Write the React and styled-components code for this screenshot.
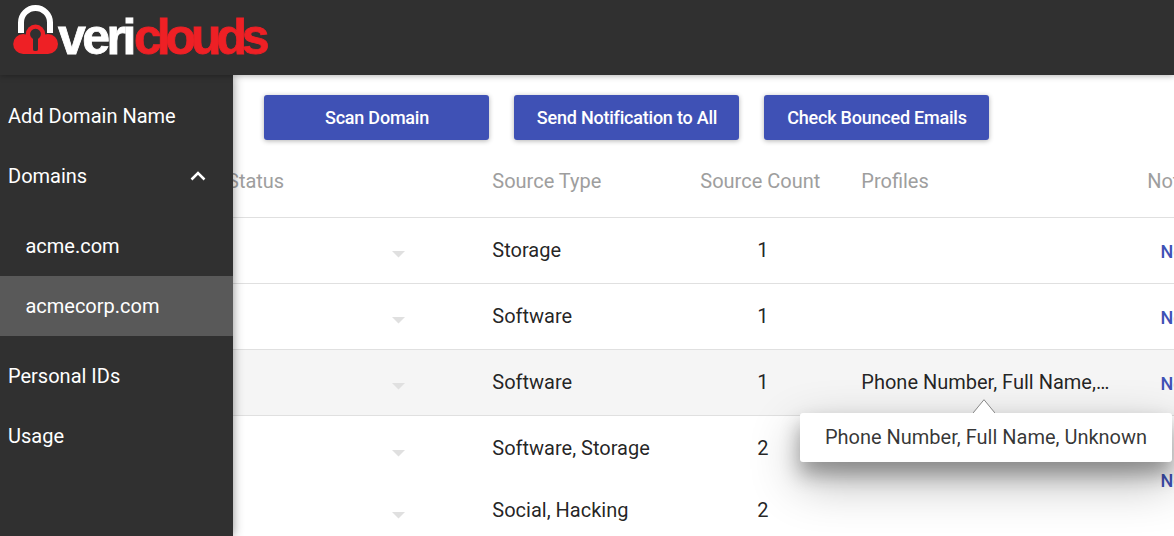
import React from "react";
import styled, { createGlobalStyle } from "styled-components";

const GlobalStyle = createGlobalStyle`
  * { box-sizing: border-box; }
  body {
    margin: 0;
    background: #fff;
    font-family: Roboto, "Liberation Sans", sans-serif;
    overflow: hidden;
  }
`;

const Page = styled.div`
  display: flex;
  flex-direction: column;
  width: 1174px;
  height: 536px;
  overflow: hidden;
`;

const Header = styled.header`
  position: relative;
  z-index: 3;
  flex: none;
  height: 75px;
  background: #303030;
  box-shadow: 0 1px 6px rgba(0, 0, 0, 0.3);
`;

const Logo = styled.svg`
  display: block;
  width: 290px;
  height: 75px;
`;

const Wordmark = styled.text`
  font: 700 50px "Liberation Sans", Arial, sans-serif;
  stroke-width: 0.8px;
`;

const Body = styled.div`
  display: flex;
  flex: 1;
  min-height: 0;
`;

const Sidebar = styled.nav`
  position: relative;
  z-index: 2;
  flex: none;
  width: 233px;
  padding-top: 11px;
  background: #303030;
  box-shadow: 0 0 10px rgba(0, 0, 0, 0.45);
`;

const NavItem = styled.div`
  display: flex;
  align-items: center;
  justify-content: space-between;
  height: 60px;
  padding: 0 25px 0 ${(p) => (p.$nested ? 25.4 : 8)}px;
  background: ${(p) => (p.$active ? "#595959" : "transparent")};
  color: #fff;
  font-size: 20px;
`;

const SubMenu = styled.div`
  padding: 10px 0;
`;

const Main = styled.main`
  flex: 1;
  min-width: 0;
  overflow: hidden;
`;

const Actions = styled.div`
  display: flex;
  gap: 25px;
  padding: 20px 0 0 31px;
`;

const ActionButton = styled.button`
  flex: none;
  width: 225px;
  height: 45px;
  padding: 0 0 0 1px;
  border: 0;
  border-radius: 3px;
  background: #3f51b5;
  box-shadow: 0 1px 5px rgba(0, 0, 0, 0.3);
  color: #fff;
  font: 500 18px Roboto, "Liberation Sans", sans-serif;
  letter-spacing: -0.22px;
`;

const Table = styled.div`
  width: 1100px;
  margin-left: -5px;
`;

const Row = styled.div`
  display: grid;
  grid-template-columns: 264.3px 208px 161px 286px 1fr;
  align-items: center;
  height: ${(p) => p.$height || 66}px;
  padding: ${(p) => (p.$head ? "4px 0 0" : "0 0 2px")};
  border-bottom: ${(p) => (p.$open ? "0" : "1px solid #e0e0e0")};
  background: ${(p) => (p.$hover ? "#f5f5f5" : "transparent")};
  color: ${(p) => (p.$head ? "#9e9e9e" : "rgba(0,0,0,0.87)")};
  font-size: 20px;
  white-space: nowrap;
`;

const StatusHeading = styled.div`
  margin-left: -1px;
`;

const StatusCell = styled.div`
  display: flex;
  justify-content: flex-end;
  padding: 10px 87.3px 0 0;
`;

const Count = styled.div`
  width: 125px;
  text-align: center;
`;

const Profiles = styled.div`
  position: relative;
  width: 248px;
`;

const Clipped = styled.div`
  overflow: hidden;
  text-overflow: ellipsis;
`;

const NotifyLink = styled.div`
  padding: ${(p) => p.$drop || 2}px 0 0 13.2px;
  margin-bottom: -${(p) => p.$drop || 2}px;
  color: #3f51b5;
  font-size: 18px;
  font-weight: 500;
`;

const Tooltip = styled.div`
  position: absolute;
  z-index: 1;
  top: 43px;
  left: -61.3px;
  width: 372px;
  height: 49px;
  border-radius: 3px;
  background: #fff;
  box-shadow: 0 19px 50px rgba(0, 0, 0, 0.3), 0 12px 20px rgba(0, 0, 0, 0.32);
  color: rgba(0, 0, 0, 0.8);
  line-height: 48px;
  text-align: center;
`;

const TooltipArrow = styled.svg`
  position: absolute;
  top: -14px;
  left: 173px;
`;

const Caret = () => (
  <svg width="13" height="7" viewBox="0 0 13 7">
    <path d="M0 0H13L6.5 6.5Z" fill="#e0e0e0" />
  </svg>
);

const rows = [
  { type: "Storage", count: 1 },
  { type: "Software", count: 1 },
  { type: "Software", count: 1, profiles: "Phone Number, Full Name, Unknown" },
  { type: "Software, Storage", count: 2, open: true, drop: 32 },
  { type: "Social, Hacking", count: 2, open: true, height: 58, noLink: true },
];

export default function App() {
  return (
    <Page>
      <GlobalStyle />
      <Header>
        <Logo viewBox="0 0 290 75" role="img" aria-label="vericlouds">
          <path d="M21 33V22.500a14.500 14.500 0 0 1 29 0V33" fill="none" stroke="#fff" strokeWidth="6" />
          <g fill="#ee2025">
            <circle cx="35.5" cy="34.3" r="9.7" />
            <circle cx="23.2" cy="44" r="10" />
            <circle cx="48" cy="44" r="10" />
            <path d="M23 36H48V54H23Z" />
          </g>
          <path d="M33 49.500V39a5.400 5.400 0 1 1 5 0V49.500a2.500 1.500 0 0 1-5 0Z" fill="#303030" />
          <Wordmark x="58" y="54" fill="#fff" stroke="#fff" letterSpacing="-3.500">veri</Wordmark>
          <Wordmark x="134" y="54" fill="#ee2025" stroke="#ee2025" letterSpacing="-5.100">clouds</Wordmark>
        </Logo>
      </Header>
      <Body>
        <Sidebar>
          <NavItem>Add Domain Name</NavItem>
          <NavItem>
            Domains
            <svg width="20" height="14" viewBox="0 0 20 14">
              <path d="M3.500 10.500L10 4L16.500 10.500" fill="none" stroke="#fff" strokeWidth="2.500" />
            </svg>
          </NavItem>
          <SubMenu>
            <NavItem $nested>acme.com</NavItem>
            <NavItem $nested $active>acmecorp.com</NavItem>
          </SubMenu>
          <NavItem>Personal IDs</NavItem>
          <NavItem>Usage</NavItem>
        </Sidebar>
        <Main>
          <Actions>
            <ActionButton>Scan Domain</ActionButton>
            <ActionButton>Send Notification to All</ActionButton>
            <ActionButton>Check Bounced Emails</ActionButton>
          </Actions>
          <Table>
            <Row $head $height={78}>
              <StatusHeading>Status</StatusHeading>
              <div>Source Type</div>
              <div>Source Count</div>
              <div>Profiles</div>
              <div>Notification</div>
            </Row>
            {rows.map((r, i) => (
              <Row key={i} $open={r.open} $height={r.height} $hover={!!r.profiles}>
                <StatusCell><Caret /></StatusCell>
                <div>{r.type}</div>
                <Count>{r.count}</Count>
                <Profiles>
                  {r.profiles && (
                    <>
                      <Clipped>{r.profiles}</Clipped>
                      <Tooltip>
                        <TooltipArrow width="22" height="15" viewBox="0 0 22 15">
                          <path d="M0 15L11 .7L22 15Z" fill="#fff" />
                          <path d="M0 14L11 .7L22 14" fill="none" stroke="#888" />
                        </TooltipArrow>
                        {r.profiles}
                      </Tooltip>
                    </>
                  )}
                </Profiles>
                {!r.noLink && <NotifyLink $drop={r.drop}>Notify</NotifyLink>}
              </Row>
            ))}
          </Table>
        </Main>
      </Body>
    </Page>
  );
}
